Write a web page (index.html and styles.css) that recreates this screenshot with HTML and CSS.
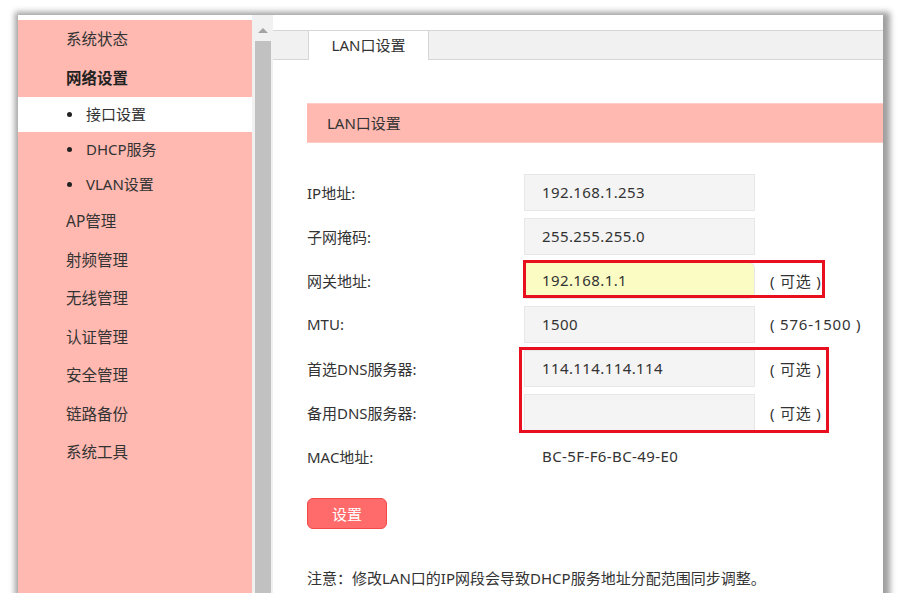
FILE: index.html
```html
<!DOCTYPE html>
<html lang="zh-CN">
<head>
  <meta charset="UTF-8" />
  <title>LAN口设置</title>
  <link rel="stylesheet" href="styles.css">
</head>
<body>
  <div class="frame">
    <div class="sidebar">
      <ul class="menu">
        <li class="menu-item">系统状态</li>
        <li class="menu-item active-group">网络设置</li>
        <li class="sub-item current">接口设置</li>
        <li class="sub-item">DHCP服务</li>
        <li class="sub-item">VLAN设置</li>
        <li class="menu-item">AP管理</li>
        <li class="menu-item">射频管理</li>
        <li class="menu-item">无线管理</li>
        <li class="menu-item">认证管理</li>
        <li class="menu-item">安全管理</li>
        <li class="menu-item">链路备份</li>
        <li class="menu-item">系统工具</li>
      </ul>
    </div>

    <div class="scrollbar">
      <div class="scroll-arrow"></div>
      <div class="scroll-thumb"></div>
    </div>

    <div class="content">
      <div class="tabbar">
        <div class="tab">LAN口设置</div>
      </div>

      <div class="panel">
        <div class="panel-title">LAN口设置</div>

        <div class="form">
          <div class="row">
            <label>IP地址:</label>
            <div class="field">192.168.1.253</div>
          </div>
          <div class="row">
            <label>子网掩码:</label>
            <div class="field">255.255.255.0</div>
          </div>
          <div class="row">
            <label>网关地址:</label>
            <div class="field filled">192.168.1.1</div>
            <span class="hint">( 可选 )</span>
          </div>
          <div class="row">
            <label>MTU:</label>
            <div class="field">1500</div>
            <span class="hint">( 576-1500 )</span>
          </div>
          <div class="row">
            <label>首选DNS服务器:</label>
            <div class="field">114.114.114.114</div>
            <span class="hint">( 可选 )</span>
          </div>
          <div class="row">
            <label>备用DNS服务器:</label>
            <div class="field"></div>
            <span class="hint">( 可选 )</span>
          </div>
          <div class="row">
            <label>MAC地址:</label>
            <div class="value">BC-5F-F6-BC-49-E0</div>
          </div>

          <div class="mark mark-gateway"></div>
          <div class="mark mark-dns"></div>
        </div>

        <button class="btn-save">设置</button>

        <div class="note">注意：修改LAN口的IP网段会导致DHCP服务地址分配范围同步调整。</div>
      </div>
    </div>
  </div>
</body>
</html>
```

FILE: styles.css
```css
body {
  margin: 0;
  padding: 0;
  background: #ffffff;
  font-family: "Noto Sans", "Noto Sans CJK SC", sans-serif;
  color: #333;
}

.frame {
  width: 865px;
  height: 578px;
  margin: 15px 0 0 18px;
  display: flex;
  overflow: hidden;
  background: #fff;
  box-shadow: 2px 2px 6px 5px rgba(0, 0, 0, 0.38);
}

/* left menu */
.sidebar {
  width: 234px;
  padding-top: 5px;
  flex-shrink: 0;
}

.menu {
  list-style: none;
  margin: 0;
  padding: 0;
  height: 100%;
  background: #ffb9b1;
}

.menu-item {
  height: 38.5px;
  line-height: 38.5px;
  padding-left: 48px;
  font-size: 15.5px;
}

.active-group {
  font-weight: bold;
  color: #222;
}

.sub-item {
  height: 35px;
  line-height: 35px;
  padding-left: 48px;
  font-size: 15px;
  display: flex;
  align-items: center;
}

.sub-item::before {
  content: "";
  width: 5px;
  height: 5px;
  border-radius: 50%;
  background: #222;
  margin: 0 14px 0 1px;
}

.sub-item.current {
  background: #ffffff;
}

/* fake scrollbar */
.scrollbar {
  width: 21px;
  flex-shrink: 0;
  background: #f1f1f1;
  display: flex;
  flex-direction: column;
  align-items: center;
}

.scroll-arrow {
  width: 0;
  height: 0;
  margin-top: 13px;
  border-left: 5px solid transparent;
  border-right: 5px solid transparent;
  border-bottom: 5px solid #a3a3a3;
}

.scroll-thumb {
  width: 16px;
  flex: 1;
  margin-top: 8px;
  background: #c1c1c1;
}

/* main content */
.content {
  flex: 1;
  min-width: 0;
}

.tabbar {
  height: 28px;
  margin-top: 15px;
  border-top: 1px solid #d6d6d6;
  border-bottom: 1px solid #d6d6d6;
  background: #f1f1f1;
  padding-left: 35px;
  display: flex;
}

.tab {
  width: 119px;
  height: 29px;
  line-height: 29px;
  background: #fff;
  border-left: 1px solid #d6d6d6;
  border-right: 1px solid #d6d6d6;
  text-align: center;
  font-size: 15px;
  margin-bottom: -1px;
}

.panel {
  padding: 43px 0 0 34px;
}

.panel-title {
  height: 38px;
  line-height: 38px;
  padding-left: 20px;
  background: #ffb9b1;
  border-top: 1px solid #ffcdc6;
  border-bottom: 1px solid #ffcdc6;
  font-size: 15px;
}

.form {
  position: relative;
  margin-top: 27px;
}

.row {
  height: 44px;
  display: flex;
  align-items: center;
  font-size: 15px;
}

.row label {
  width: 217px;
  flex-shrink: 0;
}

.field {
  width: 212px;
  height: 35px;
  line-height: 35px;
  padding-left: 17px;
  background: #f4f4f4;
  border: 1px solid #e7e7e7;
  letter-spacing: 0.4px;
}

.field.filled {
  background: #fafcc3;
  border-radius: 0 6px 6px 0;
}

.value {
  padding-left: 18px;
  letter-spacing: 0.4px;
}

.hint {
  margin-left: 15px;
  font-size: 15px;
  letter-spacing: 0.8px;
  white-space: pre;
}

/* red annotation boxes */
.mark {
  position: absolute;
  border: 3px solid #e8101e;
}

.mark-gateway {
  left: 216px;
  top: 90px;
  width: 296px;
  height: 32px;
}

.mark-dns {
  left: 212px;
  top: 177px;
  width: 304px;
  height: 80px;
}

.btn-save {
  display: block;
  margin-top: 20px;
  width: 80px;
  height: 31px;
  background: #ff6b6b;
  border: 1px solid #f54848;
  border-radius: 6px;
  color: #fff;
  font-family: inherit;
  font-size: 15px;
  padding: 0;
}

.note {
  margin-top: 38px;
  font-size: 15px;
  line-height: 22px;
}
```
